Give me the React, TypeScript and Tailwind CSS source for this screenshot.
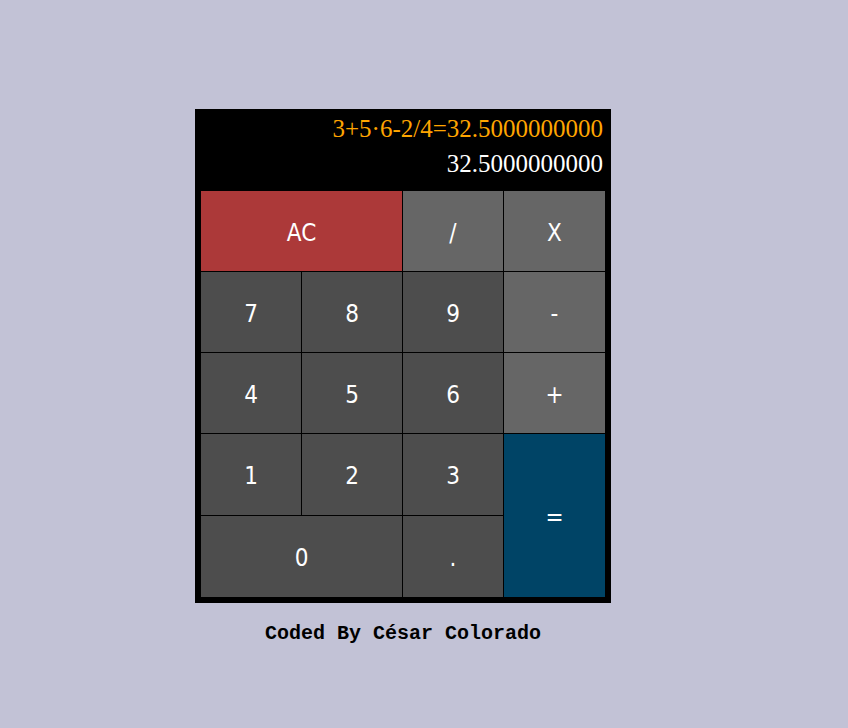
import type {FunctionComponent} from 'react';

type Key = {
    id: string;
    label: string;
    className: string;
};

const keys: Key[] = [
    {id: 'clear', label: 'AC', className: 'col-span-2 bg-[#ac3939]'},
    {id: 'divide', label: '/', className: 'bg-[#666666]'},
    {id: 'multiply', label: 'X', className: 'bg-[#666666]'},
    {id: 'seven', label: '7', className: 'bg-[#4d4d4d]'},
    {id: 'eight', label: '8', className: 'bg-[#4d4d4d]'},
    {id: 'nine', label: '9', className: 'bg-[#4d4d4d]'},
    {id: 'subtract', label: '-', className: 'bg-[#666666]'},
    {id: 'four', label: '4', className: 'bg-[#4d4d4d]'},
    {id: 'five', label: '5', className: 'bg-[#4d4d4d]'},
    {id: 'six', label: '6', className: 'bg-[#4d4d4d]'},
    {id: 'add', label: '+', className: 'bg-[#666666]'},
    {id: 'one', label: '1', className: 'bg-[#4d4d4d]'},
    {id: 'two', label: '2', className: 'bg-[#4d4d4d]'},
    {id: 'three', label: '3', className: 'bg-[#4d4d4d]'},
    {id: 'equals', label: '=', className: 'row-span-2 bg-[#004466]'},
    {id: 'zero', label: '0', className: 'col-span-2 bg-[#4d4d4d]'},
    {id: 'decimal', label: '.', className: 'bg-[#4d4d4d]'},
];

const Calculator: FunctionComponent = () => (
    <div className="w-[416px] bg-black px-[6px] pb-[6px]">
        <div className="h-[82px] pt-[2px] pr-[2px] flex flex-col items-end font-['Liberation_Serif',serif] text-[25px] leading-[35px]">
            <div className="text-[#ffa500]">3+5·6-2/4=32.5000000000</div>
            <div id="display" className="text-white">32.5000000000</div>
        </div>
        <div className="grid grid-cols-[100px_100px_100px_101px] grid-rows-[80px_80px_80px_81px_81px] gap-px">
            {keys.map(key => (
                <button
                    key={key.id}
                    id={key.id}
                    className={`${key.className} flex items-center justify-center pt-[3px] text-white text-[24px] font-['DejaVu_Sans_Condensed','DejaVu_Sans',sans-serif]`}
                >
                    {key.label}
                </button>
            ))}
        </div>
    </div>
);

export default function App() {
    return (
        <div className="min-h-[728px] bg-[#c2c2d6] flex justify-center pr-[42px]">
            <div className="flex flex-col items-center pt-[109px]">
                <Calculator />
                <p className="mt-[19px] font-['Liberation_Mono',monospace] font-bold text-[20px] leading-[23px] text-black">
                    Coded By César Colorado
                </p>
            </div>
        </div>
    );
}
